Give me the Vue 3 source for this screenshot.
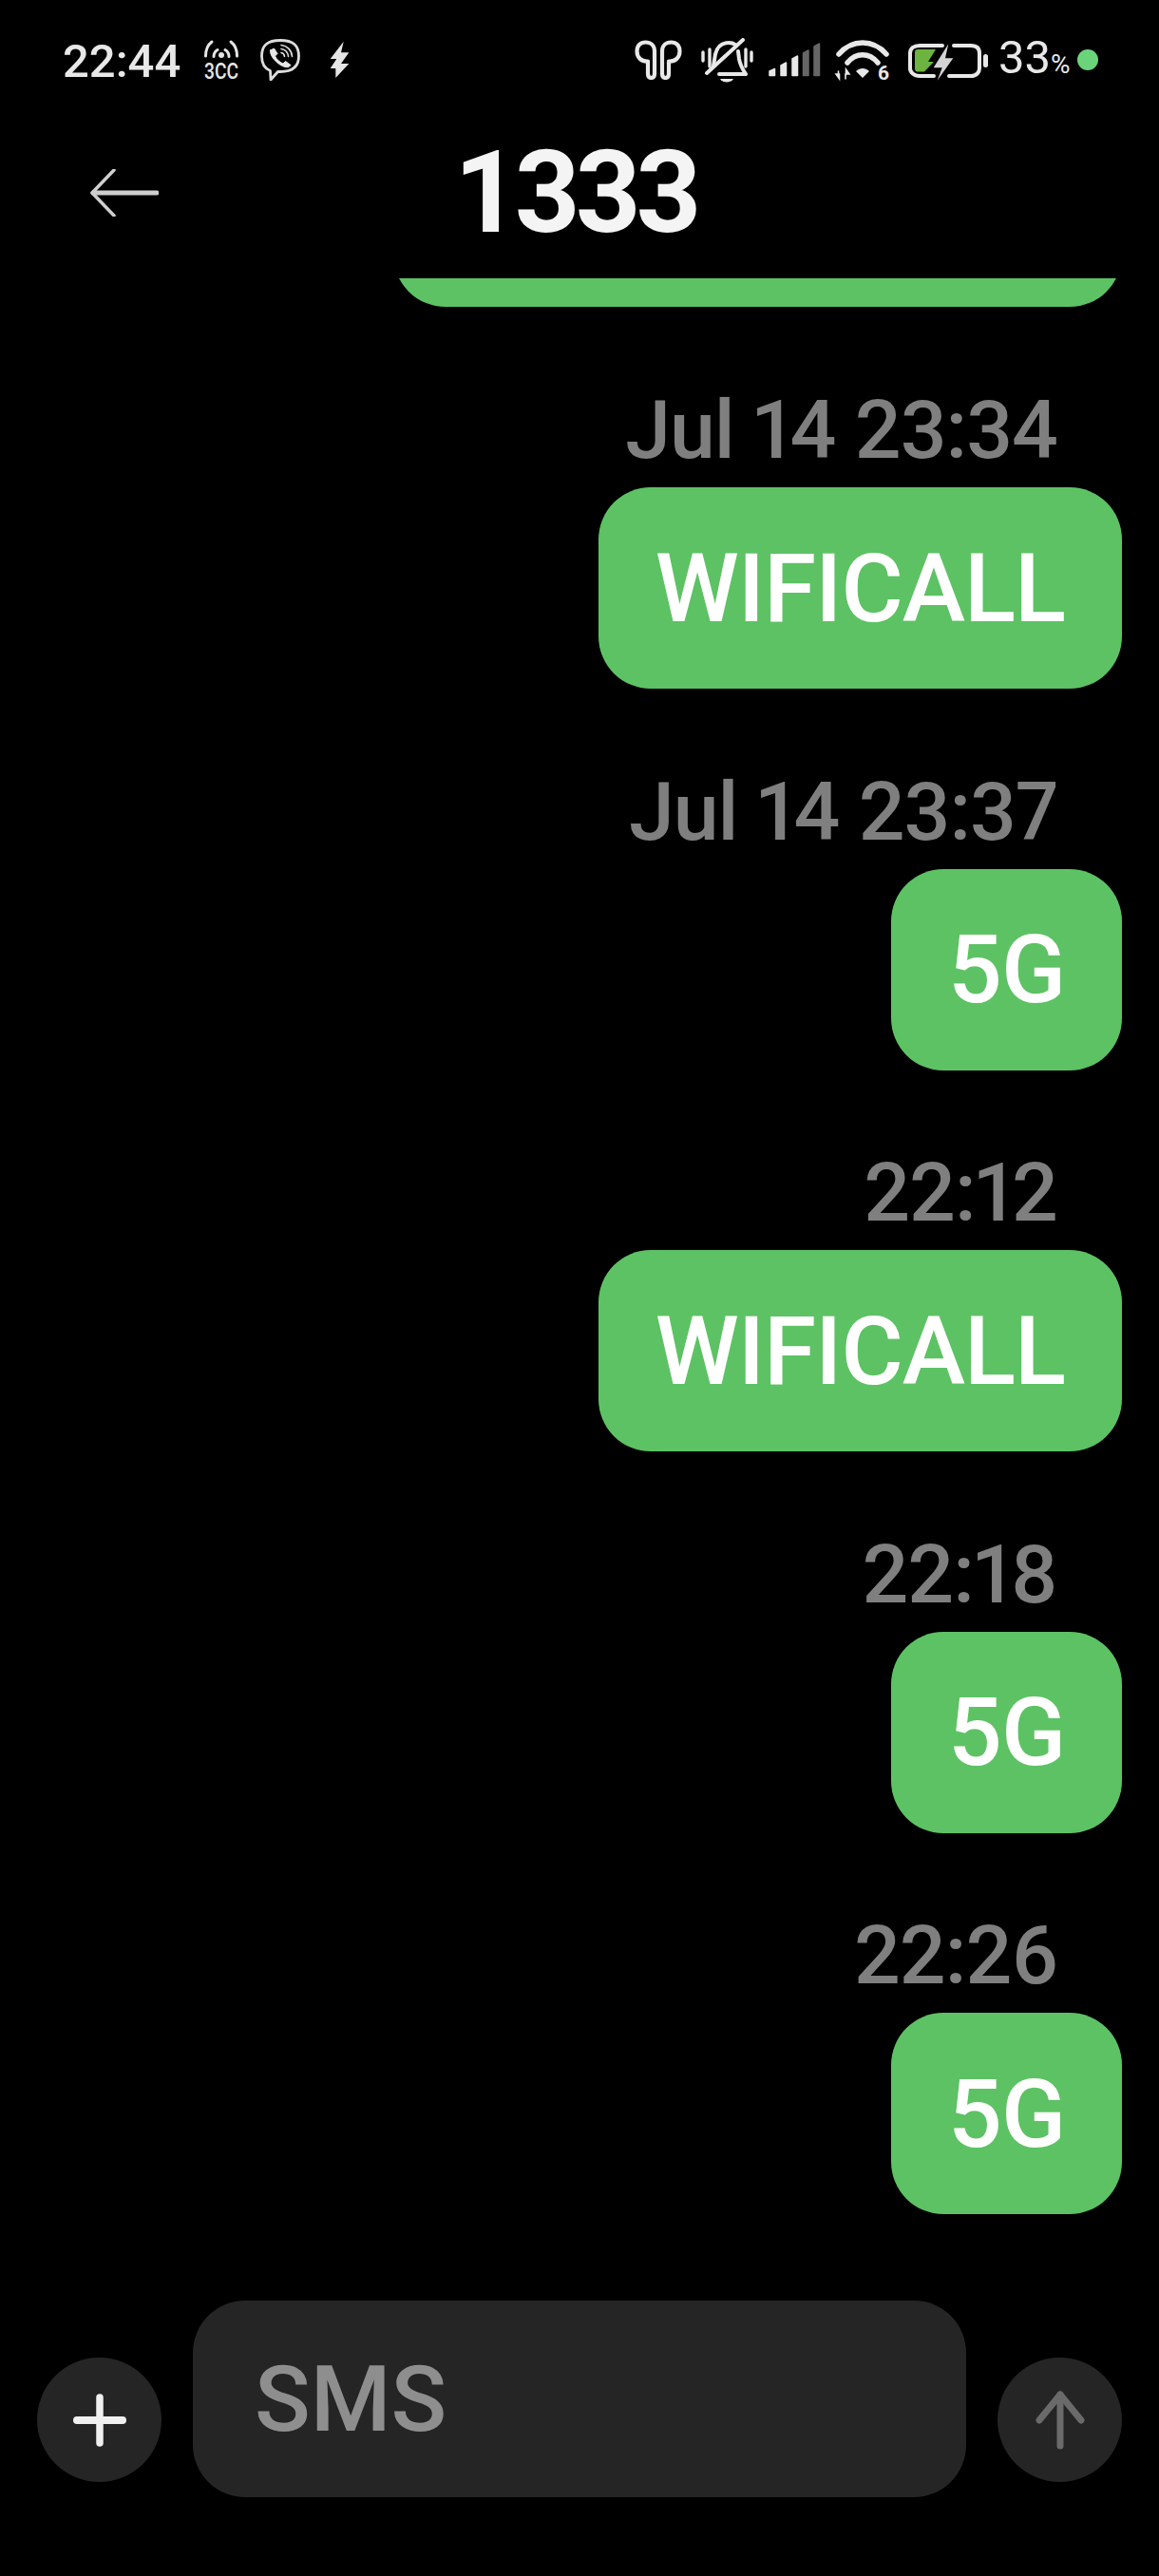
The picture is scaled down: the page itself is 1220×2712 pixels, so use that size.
<template>
  <div class="screen">
    <div class="status-bar">
      <div class="status-left">
        <span class="clock">22:44</span>
        <svg class="ic-hotspot" width="36" height="44" viewBox="0 0 36 44" fill="none" stroke="#e6e6e6" stroke-linecap="round">
          <path d="M1.500 18C1.500 11 4 6 8 3M34.500 18C34.500 11 32 6 28 3" stroke-width="3" />
          <path d="M10 18.500C10 15.500 11.500 13 14 11.500M26 18.500C26 15.500 24.500 13 22 11.500" stroke-width="3" />
          <circle cx="18" cy="17" r="3" fill="#e6e6e6" stroke="none" />
          <text x="0" y="42" class="mini" textLength="36" lengthAdjust="spacingAndGlyphs">3CC</text>
        </svg>
        <svg class="ic-viber" width="42" height="44" viewBox="0 0 42 44" fill="none" stroke="#dcdcdc" stroke-linecap="round" stroke-linejoin="round">
          <path d="M21 1.500C35 1.500 40.500 7 40.500 18C40.500 29 34 34.500 21 34.500L18.500 34.500L11 43L10.500 33.500C4 31 1.500 26 1.500 18C1.500 7 7 1.500 21 1.500Z" stroke-width="2.800" />
          <path d="M10.500 12L14.500 10L18 15.500L15.500 18C17 21.500 20.500 24.500 24 26L26.500 23.500L32 27.500L30 29.500C23 31.500 9.500 20 10.500 12Z" fill="#e6e6e6" stroke="#e6e6e6" stroke-width="1" />
          <path d="M22 6.500C28 7 33 11.500 33.500 18.500M22 10.500C26 11 29 14 29.500 18.500M22 14.500C24 14.800 25.300 16.200 25.500 18.500" stroke-width="1.600" />
        </svg>
        <svg class="ic-bolt" width="22" height="40" viewBox="0 0 22 40">
          <path d="M15.700 0.700L1.700 19H8.300L1.700 29H7.300V39L21.300 24H13L21.300 12.300H13Z" fill="#e6e6e6" />
        </svg>
      </div>
      <div class="status-right">
        <svg class="ic-buds" width="50" height="42" viewBox="0 0 50 42" fill="none" stroke="#e8e8e8" stroke-width="4.200" stroke-linejoin="round">
          <path d="M2.500 12C2.500 6 6 2.500 11.500 2.500C17 2.500 21 6 21 12L21 35.500C21 38.500 19.500 40 17.500 40C15.500 40 14 38.500 14 35.500L14 22.500C7 23 2.500 18.500 2.500 12Z" />
          <path d="M47.500 12C47.500 6 44 2.500 38.500 2.500C33 2.500 29 6 29 12L29 35.500C29 38.500 30.500 40 32.500 40C34.500 40 36 38.500 36 35.500L36 22.500C43 23 47.500 18.500 47.500 12Z" />
        </svg>
        <svg class="ic-bell" width="55" height="47" viewBox="0 0 55 47" fill="none" stroke="#e8e8e8" stroke-width="4" stroke-linecap="round" stroke-linejoin="round">
          <path d="M13 29L15 17C17 9 22 5 29 5C32 5 34 5.500 36 7" />
          <path d="M39 14L40 22C41 28 43 32 47 38L19 38" />
          <path d="M6 37L44 2" />
          <path d="M2 15V24M9 12V30M47 12V30M53 15V24" stroke-width="3.400" />
          <path d="M20 43H34C32 47.500 22 47.500 20 43Z" fill="#e8e8e8" stroke="none" />
        </svg>
        <svg class="ic-signal" width="55" height="36" viewBox="0 0 55 36" fill="#e8e8e8" stroke="#e8e8e8" stroke-width="1.500" stroke-linejoin="round">
          <path d="M1 30L6.500 27.500V34.500H1Z" />
          <path d="M13 24L18.500 21V34.500H13Z" />
          <path d="M25 17L30.500 14V34.500H25Z" />
          <path d="M36.500 11L42 8V34.500H36.500Z" fill="#666" stroke="#666" />
          <path d="M48 4L53.500 1V34.500H48Z" fill="#666" stroke="#666" />
        </svg>
        <svg class="ic-wifi" width="58" height="44" viewBox="0 0 58 44" fill="none" stroke="#e8e8e8" stroke-linecap="round" overflow="visible">
          <path d="M4 16C18 0 40 0 54 16" stroke-width="5.500" />
          <path d="M13 25C22 14 36 14 45 25" stroke-width="5.500" />
          <path d="M22 34C26 30 32 30 36 34L29 41Z" fill="#e8e8e8" stroke="none" />
          <path d="M3.500 34V37H1L4.500 42V37M11 42V37H15L11.500 32V37" fill="#e8e8e8" stroke-width="1.600" />
          <text x="45" y="43" class="wifi-six">6</text>
        </svg>
        <svg class="ic-battery" width="85" height="38" viewBox="0 0 85 38" fill="none" stroke-linecap="round">
          <path d="M37 4L13 4C7 4 3 7 3 12L3 28C3 32 7 36 13 36L28 36" stroke="#e8e8e8" stroke-width="4" />
          <path d="M49 4L67 4C73 4 76 7 76 12L76 28C76 32 73 36 67 36L44 36" stroke="#e8e8e8" stroke-width="4" />
          <path d="M11 8H30L22 21H28L18 31.500H11Q8 31.500 8 28V11Q8 8 11 8Z" fill="#6cb33f" />
          <rect x="80" y="13" width="5" height="14" rx="2.500" fill="#e8e8e8" />
          <path d="M43.300 2.300L27.700 27.300H36.700L31.700 40.700L48.300 17.300H40Z" fill="#d4d4d4" />
        </svg>
        <span class="battery-pct">33<small>%</small></span>
        <span class="green-dot"></span>
      </div>
    </div>

    <header class="top-bar">
      <svg class="back" width="72" height="50" viewBox="0 0 72 50" fill="none" stroke="#cfcfcf" stroke-linecap="round" stroke-linejoin="round">
        <path d="M25 1L2 25L25 49" stroke-width="3.500" />
        <path d="M3 25H70" stroke-width="5" />
      </svg>
      <h1>1333</h1>
    </header>

    <div class="thread">
      <div class="prev-clip">
        <div class="prev-bubble"></div>
      </div>
      <div v-for="m in messages" :key="m.time" class="msg">
        <div class="stamp">{{ m.time }}</div>
        <div class="bubble">{{ m.text }}</div>
      </div>
    </div>

    <div class="composer">
      <button class="round">
        <svg width="56" height="56" viewBox="0 0 56 56" stroke="#f0f0f0" stroke-linecap="round">
          <path d="M28 4V52" stroke-width="7.500" />
          <path d="M4 28H52" stroke-width="8" />
        </svg>
      </button>
      <div class="input">SMS</div>
      <button class="round">
        <svg width="54" height="64" viewBox="0 0 54 64" fill="none" stroke="#6a6a6a" stroke-width="7" stroke-linecap="round" stroke-linejoin="round">
          <path d="M27 5V59" />
          <path d="M5 32L27 5L49 32" />
        </svg>
      </button>
    </div>
  </div>
</template>

<script setup>
const messages = [
  { time: 'Jul 14 23:34', text: 'WIFICALL' },
  { time: 'Jul 14 23:37', text: '5G' },
  { time: '22:12', text: 'WIFICALL' },
  { time: '22:18', text: '5G' },
  { time: '22:26', text: '5G' }
]
</script>

<style>
html,
body {
  margin: 0;
  background: #000;
}
</style>

<style scoped>
.screen {
  position: relative;
  width: 1220px;
  height: 2712px;
  background: #000;
  color: #fff;
  font-family: Roboto, "Liberation Sans", sans-serif;
  overflow: hidden;
}

.status-bar {
  height: 128px;
  box-sizing: border-box;
  padding: 40px 64px 0 66px;
  display: flex;
  justify-content: space-between;
  align-items: flex-start;
}

.status-left,
.status-right {
  display: flex;
  align-items: center;
  height: 46px;
}

.clock {
  font-size: 49px;
  line-height: 46px;
  font-weight: 500;
  color: #e8e8e8;
  width: 149px;
  padding-top: 3px;
}

.ic-hotspot,
.ic-wifi {
  overflow: visible;
}

.ic-viber {
  margin-left: 23px;
}

.ic-bolt {
  margin-left: 30px;
}

.ic-bell {
  margin-left: 20px;
}

.ic-signal {
  margin-left: 16px;
}

.ic-wifi {
  margin-left: 15px;
}

.ic-battery {
  margin-left: 18px;
  overflow: visible;
}

.mini {
  font-size: 24px;
  font-weight: 500;
  fill: #e6e6e6;
  stroke: none;
}

.wifi-six {
  font-size: 21px;
  font-weight: 700;
  fill: #e8e8e8;
  stroke: none;
}

.battery-pct {
  margin-left: 11px;
  font-size: 49px;
  line-height: 46px;
  color: #e8e8e8;
  width: 76px;
  padding-top: 3px;
}

.battery-pct small {
  font-size: 28px;
}

.green-dot {
  width: 22px;
  height: 22px;
  margin-left: 7px;
  border-radius: 50%;
  background: #6bd47b;
}

.top-bar {
  height: 165px;
  display: flex;
  align-items: center;
  padding: 0 0 16px 95px;
  box-sizing: border-box;
}

.top-bar h1 {
  margin: 0 0 0 311px;
  font-size: 120px;
  line-height: 1;
  font-weight: 700;
  letter-spacing: -5px;
  color: #f4f4f4;
}

.thread {
  display: flex;
  flex-direction: column;
  align-items: flex-end;
  padding-right: 39px;
}

.prev-clip {
  height: 30px;
  width: 767px;
  overflow: hidden;
  display: flex;
  align-items: flex-end;
}

.prev-bubble {
  width: 100%;
  height: 212px;
  flex: none;
  background: #5dc264;
  border-radius: 55px;
}

.msg {
  height: 401.500px;
  display: flex;
  flex-direction: column;
  align-items: flex-end;
}

.prev-clip + .msg {
  margin-top: 90px;
}

.stamp {
  height: 100px;
  line-height: 80px;
  font-size: 86px;
  font-weight: 500;
  font-feature-settings: "pnum";
  letter-spacing: -1px;
  color: #7f7f7f;
  margin-right: 68px;
  white-space: nowrap;
}

.bubble {
  height: 212px;
  box-sizing: border-box;
  padding: 0 60px;
  display: flex;
  align-items: center;
  background: #5dc264;
  border-radius: 55px;
  font-size: 100px;
  font-weight: 500;
  letter-spacing: -1px;
}

.composer {
  position: absolute;
  left: 39px;
  top: 2422px;
  width: 1142px;
  height: 207px;
  display: flex;
  align-items: flex-end;
  justify-content: space-between;
}

.round {
  width: 131px;
  height: 131px;
  margin-bottom: 16px;
  padding: 0;
  border: 0;
  border-radius: 50%;
  background: #252525;
  display: flex;
  align-items: center;
  justify-content: center;
}

.input {
  width: 814px;
  height: 207px;
  box-sizing: border-box;
  padding: 0 0 0 65px;
  background: #252525;
  border-radius: 55px;
  display: flex;
  align-items: center;
  font-size: 97px;
  font-weight: 500;
  color: #8e8e8e;
}
</style>
